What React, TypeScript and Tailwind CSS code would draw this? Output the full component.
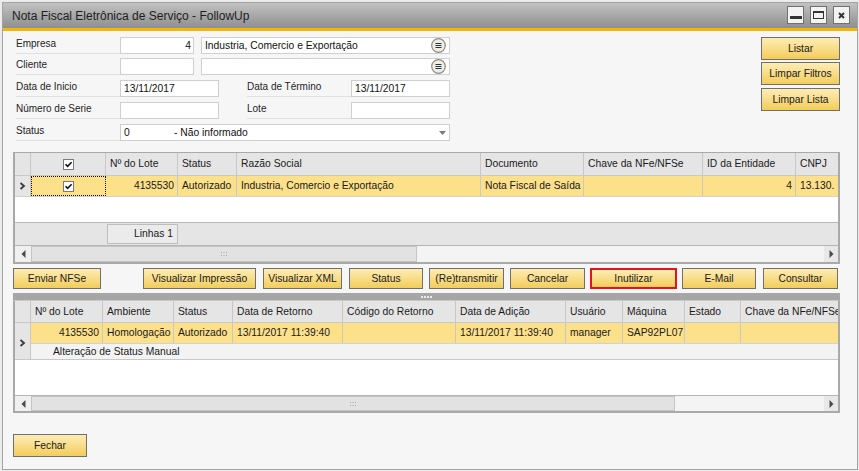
import React from "react";

const Chevron = () => (
  <svg width="7" height="8" viewBox="0 0 7 8">
    <path d="M1.5 1 L5 4 L1.5 7" fill="none" stroke="#3a3a3a" strokeWidth="1.8" />
  </svg>
);

const CheckBox = () => (
  <svg width="11" height="11" viewBox="0 0 11 11">
    <rect x="0.5" y="0.5" width="10" height="10" fill="#ffffff" stroke="#7a7a7a" />
    <path d="M2.6 5.2 L4.6 7.4 L8.6 3.2" fill="none" stroke="#111111" strokeWidth="1.6" />
  </svg>
);

const ComboIcon = () => (
  <svg width="15" height="15" viewBox="0 0 15 15">
    <circle cx="7.5" cy="7.5" r="6.8" fill="#f1eedc" stroke="#8a8a8a" strokeWidth="1.2" />
    <path d="M4.5 5.5h6M4.5 7.5h6M4.5 9.5h6" stroke="#1c355e" strokeWidth="1.2" />
  </svg>
);

const Grip = () => (
  <svg width="8" height="6" viewBox="0 0 8 6">
    {[0, 1, 2].map((c) =>
      [0, 1].map((r) => (
        <rect key={`${c}-${r}`} x={1 + c * 2.5} y={1 + r * 3} width="1" height="1" fill="#a8a8a8" />
      ))
    )}
  </svg>
);

const LeftArrow = () => (
  <svg width="5" height="8" viewBox="0 0 5 8">
    <path d="M4.5 0 L0.5 4 L4.5 8 Z" fill="#4a4a4a" />
  </svg>
);

const RightArrow = () => (
  <svg width="5" height="8" viewBox="0 0 5 8">
    <path d="M0.5 0 L4.5 4 L0.5 8 Z" fill="#4a4a4a" />
  </svg>
);

function YBtn({ children, className = "" }: { children: React.ReactNode; className?: string }) {
  return (
    <div
      className={`flex items-center justify-center border border-[#6f6f6f] bg-gradient-to-b from-[#fdecb4] to-[#f3cd57] text-[10.3px] text-[#1a1a1a] whitespace-nowrap ${className}`}
    >
      {children}
    </div>
  );
}

function Label({ children, className = "" }: { children: React.ReactNode; className?: string }) {
  return (
    <div className={`h-[17px] w-[104px] shrink-0 border-b border-[#e0e0e0] text-[10px] leading-[13px] text-[#1e1e1e] ${className}`}>
      {children}
    </div>
  );
}

function Field({ children, className = "" }: { children?: React.ReactNode; className?: string }) {
  return (
    <div className={`h-[17px] shrink-0 bg-white border border-[#cfcfcf] flex items-center text-[10.3px] text-[#111] whitespace-nowrap ${className}`}>
      {children}
    </div>
  );
}

type Col = { w: string; h: string; d: string; r?: boolean };

const g1: Col[] = [
  { w: "w-[72px]", h: "Nº do Lote", d: "4135530", r: true },
  { w: "w-[59px]", h: "Status", d: "Autorizado" },
  { w: "w-[244px]", h: "Razão Social", d: "Industria, Comercio e Exportação" },
  { w: "w-[103px]", h: "Documento", d: "Nota Fiscal de Saída" },
  { w: "w-[119px]", h: "Chave da NFe/NFSe", d: "" },
  { w: "w-[93px]", h: "ID da Entidade", d: "4", r: true },
  { w: "flex-1", h: "CNPJ", d: "13.130." },
];

const g2: Col[] = [
  { w: "w-[72px]", h: "Nº do Lote", d: "4135530", r: true },
  { w: "w-[71px]", h: "Ambiente", d: "Homologação" },
  { w: "w-[59px]", h: "Status", d: "Autorizado" },
  { w: "w-[110px]", h: "Data de Retorno", d: "13/11/2017 11:39:40" },
  { w: "w-[113px]", h: "Código do Retorno", d: "" },
  { w: "w-[110px]", h: "Data de Adição", d: "13/11/2017 11:39:40" },
  { w: "w-[57px]", h: "Usuário", d: "manager" },
  { w: "w-[62px]", h: "Máquina", d: "SAP92PL07" },
  { w: "w-[56px]", h: "Estado", d: "" },
  { w: "flex-1", h: "Chave da NFe/NFSe", d: "" },
];

function Cell({ w, children, right = false, className = "" }: { w: string; children?: React.ReactNode; right?: boolean; className?: string }) {
  return (
    <div
      className={`${w} h-full shrink-0 min-w-0 border-r border-[#c8c8c8] flex items-center overflow-hidden whitespace-nowrap ${right ? "justify-end pr-[3px]" : "pl-[4px]"} ${className}`}
    >
      {children}
    </div>
  );
}

function ScrollBar({ thumb, h }: { thumb: string; h: string }) {
  return (
    <div className={`${h} flex border-t border-[#b5b5b5] bg-[#f4f4f4]`}>
      <div className="w-[16px] h-full bg-[#f0f0f0] flex items-center justify-center">
        <LeftArrow />
      </div>
      <div className={`${thumb} h-full bg-[#e2e2e2] border border-[#c4c4c4] flex items-center justify-center`}>
        <Grip />
      </div>
      <div className="flex-1" />
      <div className="w-[14px] h-full bg-[#e8e8e8] flex items-center justify-center">
        <RightArrow />
      </div>
    </div>
  );
}

export default function App() {
  return (
    <div className="w-[859px] h-[471px] bg-[#ececec] pt-[2px] pl-[2px] overflow-hidden font-['Liberation_Sans',Arial,sans-serif] text-[#1c1c1c]">
      <div className="w-[856px] h-[468px] border border-[#a3a3a3] bg-[#f6f6f6] flex flex-col">
        {/* Title bar */}
        <div className="h-[25px] shrink-0 bg-gradient-to-b from-[#c2c2c2] to-[#8f8f8f] flex items-center pl-[9px] pr-[7px]">
          <span className="text-[12px] text-[#1e1e1e] whitespace-nowrap">Nota Fiscal Eletrônica de Serviço - FollowUp</span>
          <div className="ml-auto flex gap-[6px] self-start mt-[3px]">
            <div className="w-[17px] h-[18px] bg-[#f3f3f3] border border-[#707070] flex items-end justify-center pb-[4px]">
              <div className="w-[12px] h-[3px] bg-[#333]" />
            </div>
            <div className="w-[17px] h-[18px] bg-[#f3f3f3] border border-[#707070] flex items-center justify-center">
              <div className="w-[11px] h-[8px] border border-[#333] border-t-2" />
            </div>
            <div className="w-[17px] h-[18px] bg-[#f3f3f3] border border-[#707070] flex items-center justify-center">
              <svg width="7" height="7" viewBox="0 0 7 7">
                <path d="M1 1L6 6M6 1L1 6" stroke="#333" strokeWidth="1.9" />
              </svg>
            </div>
          </div>
        </div>
        <div className="h-[3px] shrink-0 bg-[#f5b800]" />

        {/* Top section: filters + buttons */}
        <div className="flex pt-[6px]">
          <div className="ml-[13px] flex flex-col w-[434px]">
            <div className="flex">
              <Label>Empresa</Label>
              <Field className="w-[74px] justify-end pr-[2px]">4</Field>
              <Field className="w-[249px] ml-[7px] pl-[3px] justify-between pr-[3px]">
                <span>Industria, Comercio e Exportação</span>
                <ComboIcon />
              </Field>
            </div>
            <div className="flex mt-[4px]">
              <Label>Cliente</Label>
              <Field className="w-[74px]" />
              <Field className="w-[249px] ml-[7px] justify-end pr-[3px]">
                <ComboIcon />
              </Field>
            </div>
            <div className="flex mt-[5px]">
              <Label>Data de Inicio</Label>
              <Field className="w-[99px] pl-[3px]">13/11/2017</Field>
              <Label className="ml-[28px]">Data de Término</Label>
              <Field className="w-[99px] pl-[3px]">13/11/2017</Field>
            </div>
            <div className="flex mt-[5px]">
              <Label>Número de Serie</Label>
              <Field className="w-[99px]" />
              <Label className="ml-[28px]">Lote</Label>
              <Field className="w-[99px]" />
            </div>
            <div className="flex mt-[5px]">
              <Label>Status</Label>
              <Field className="w-[330px] pl-[3px] pr-[3px]">
                <span className="w-[50px]">0</span>
                <span>- Não informado</span>
                <svg className="ml-auto" width="7" height="4" viewBox="0 0 7 4">
                  <path d="M0 0 L7 0 L3.5 4 Z" fill="#7a7a7a" />
                </svg>
              </Field>
            </div>
          </div>
          <div className="ml-auto mr-[17px] flex flex-col w-[79px]">
            <YBtn className="h-[23px]">Listar</YBtn>
            <YBtn className="h-[23px] mt-[2px]">Limpar Filtros</YBtn>
            <YBtn className="h-[23px] mt-[3px]">Limpar Lista</YBtn>
          </div>
        </div>

        {/* Grid 1 */}
        <div className="mt-[11px] ml-[10px] w-[827px] border-l-2 border-t border-r-2 border-b-2 border-[#a9a9a9] flex flex-col text-[10.3px] text-[#1a1a1a]">
          <div className="h-[23px] flex bg-[#e5e5e5] border-b border-[#c8c8c8]">
            <Cell w="w-[16px]" />
            <Cell w="w-[75px]" className="justify-center !pl-0">
              <CheckBox />
            </Cell>
            {g1.map((c) => (
              <Cell key={c.h} w={c.w} className={c.w === "flex-1" ? "border-r-0" : ""}>
                {c.h}
              </Cell>
            ))}
          </div>
          <div className="h-[21px] flex bg-[#fde08a] border-b border-[#d2d2d2]">
            <Cell w="w-[16px]" className="bg-[#e5e5e5] !pl-[4px]">
              <Chevron />
            </Cell>
            <div className="w-[75px] h-full shrink-0 border border-dotted border-[#111] flex items-center justify-center">
              <CheckBox />
            </div>
            {g1.map((c) => (
              <Cell key={c.h} w={c.w} right={c.r} className={c.w === "flex-1" ? "border-r-0" : ""}>
                {c.d}
              </Cell>
            ))}
          </div>
          <div className="h-[25px] bg-white" />
          <div className="h-[23px] bg-[#e5e5e5] border-t border-[#b8b8b8] flex">
            <div className="ml-[92px] mt-[1px] w-[71px] h-[20px] border border-[#bdbdbd] bg-[#ebebeb] flex items-center justify-end pr-[4px]">
              Linhas 1
            </div>
          </div>
          <ScrollBar thumb="w-[386px]" h="h-[17px]" />
        </div>

        {/* Action buttons */}
        <div className="mt-[4px] ml-[10px] flex h-[21px]">
          <YBtn className="w-[88px]">Enviar NFSe</YBtn>
          <YBtn className="w-[113px] ml-[42px]">Visualizar Impressão</YBtn>
          <YBtn className="w-[79px] ml-[7px]">Visualizar XML</YBtn>
          <YBtn className="w-[74px] ml-[7px]">Status</YBtn>
          <YBtn className="w-[75px] ml-[6px]">(Re)transmitir</YBtn>
          <YBtn className="w-[75px] ml-[6px]">Cancelar</YBtn>
          <YBtn className="w-[87px] ml-[5px] !border-2 !border-[#e5141b]">Inutilizar</YBtn>
          <YBtn className="w-[74px] ml-[5px]">E-Mail</YBtn>
          <YBtn className="w-[75px] ml-[7px]">Consultar</YBtn>
        </div>

        {/* Splitter */}
        <div className="mt-[4px] ml-[10px] w-[827px] h-[7px] bg-[#a6a6a6] flex items-center justify-center gap-[1px]">
          <div className="w-[2px] h-[2px] bg-[#ececec]" />
          <div className="w-[2px] h-[2px] bg-[#ececec]" />
          <div className="w-[2px] h-[2px] bg-[#ececec]" />
          <div className="w-[2px] h-[2px] bg-[#ececec]" />
        </div>

        {/* Grid 2 */}
        <div className="ml-[10px] w-[827px] border-l-2 border-t border-r-2 border-b-2 border-[#a9a9a9] border-t-[#c8c8c8] flex flex-col text-[10.3px] text-[#1a1a1a]">
          <div className="h-[22px] flex bg-[#e5e5e5] border-b border-[#c8c8c8]">
            <Cell w="w-[16px]" />
            {g2.map((c) => (
              <Cell key={c.h} w={c.w} className={c.w === "flex-1" ? "border-r-0" : ""}>
                {c.h}
              </Cell>
            ))}
          </div>
          <div className="flex h-[37px]">
            <div className="w-[16px] h-full shrink-0 bg-[#e5e5e5] border-r border-b border-[#c8c8c8] flex items-center pl-[4px] pt-[3px]">
              <Chevron />
            </div>
            <div className="flex-1 flex flex-col min-w-0">
              <div className="h-[21px] flex bg-[#fde08a] border-b border-[#d2d2d2]">
                {g2.map((c) => (
                  <Cell key={c.h} w={c.w} right={c.r} className={c.w === "flex-1" ? "border-r-0" : ""}>
                    {c.d}
                  </Cell>
                ))}
              </div>
              <div className="h-[16px] bg-[#f3f3f3] border-b border-[#c8c8c8] flex items-center pl-[22px] whitespace-nowrap">
                Alteração de Status Manual
              </div>
            </div>
          </div>
          <div className="h-[35px] bg-white" />
          <ScrollBar thumb="w-[644px]" h="h-[16px]" />
        </div>

        {/* Fechar */}
        <YBtn className="mt-[21px] ml-[10px] w-[74px] h-[23px]">Fechar</YBtn>
      </div>
    </div>
  );
}
